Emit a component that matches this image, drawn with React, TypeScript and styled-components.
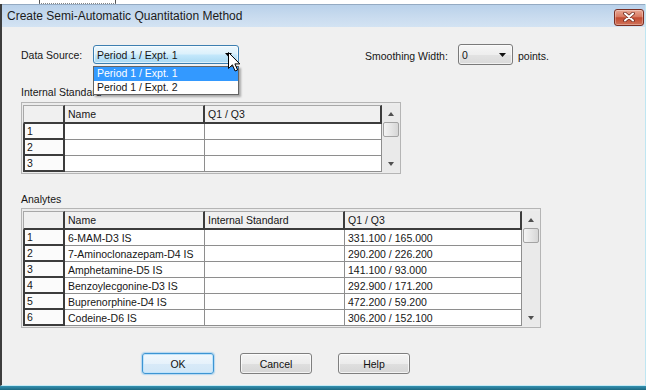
import React from 'react';
import styled, { createGlobalStyle } from 'styled-components';

const GlobalStyle = createGlobalStyle`
  html, body { margin: 0; padding: 0; }
  body {
    width: 646px; height: 390px; overflow: hidden; background: #fff;
    font-family: "Liberation Sans", Arial, sans-serif;
  }
  * { box-sizing: border-box; }
`;

const DARK = '#3c3c3c';
const GRID = '#8e8e8e';

const Screen = styled.div`
  width: 646px;
  height: 390px;
  display: flex;
  flex-direction: column;
  background: #fff;
  overflow: hidden;
`;

const BackdropTop = styled.div`
  height: 4px;
  flex: none;
  background: #fff;
  display: flex;
`;

const BackdropScrap = styled.div`
  margin-left: 39px;
  width: 77px;
  height: 4px;
  border-left: 1px solid #555;
  border-right: 1px solid #555;
  border-bottom: 1px dotted #888;
`;

const BackdropBottom = styled.div`
  height: 4px;
  flex: none;
  background: linear-gradient(#3592b2, #1c6880);
`;

const Window = styled.div`
  flex: 1;
  display: flex;
  flex-direction: column;
  border-left: 2px solid #3d3d3d;
  border-right: 1px solid #bfe6f2;
  border-bottom: 1px solid #c4ebf6;
  background: #f0f0f0;
`;

const TitleBar = styled.div`
  height: 23px;
  flex: none;
  display: flex;
  align-items: center;
  justify-content: space-between;
  padding: 0 1px 0 5px;
  background: linear-gradient(#b9d1ea, #cadcef 60%, #d3e3f3);
  border-top: 1px solid #94aac2;
`;

const Title = styled.span`
  font-size: 12px;
  color: #1b1b1b;
  white-space: nowrap;
`;

const CloseButton = styled.div`
  width: 30px;
  height: 17px;
  margin-top: 2px;
  border: 1px solid #7a2e22;
  border-radius: 3px;
  background: linear-gradient(#e9a895 0%, #d87a62 45%, #c24a31 52%, #d0735a 100%);
  box-shadow: inset 0 0 0 1px rgba(255, 255, 255, 0.3);
  display: flex;
  align-items: center;
  justify-content: center;
`;

const Client = styled.div`
  flex: 1;
  display: flex;
  flex-direction: column;
  padding: 17px 0 0 19px;
  font-size: 10.5px;
  color: #161616;
`;

const TopRow = styled.div`
  height: 21px;
  display: flex;
  align-items: center;
`;

const FieldGroup = styled.div<{ $width?: number }>`
  display: flex;
  align-items: center;
  height: 100%;
  ${(p) => (p.$width ? `width: ${p.$width}px;` : '')}
`;

const FieldLabel = styled.span<{ $width: number; $drop?: number }>`
  width: ${(p) => p.$width}px;
  white-space: nowrap;
  padding-top: ${(p) => p.$drop ?? 0}px;
`;

const ComboWrap = styled.div`
  position: relative;
`;

const Combo = styled.div<{ $width: number; $height: number; $focused?: boolean }>`
  width: ${(p) => p.$width}px;
  height: ${(p) => p.$height}px;
  border: 1px solid ${(p) => (p.$focused ? '#3c7fb1' : '#7a7a7a')};
  border-radius: 3px;
  background: ${(p) =>
    p.$focused
      ? 'linear-gradient(#eef8fd 0%, #dcf1fc 45%, #c2e7fb 55%, #a9d9f3 100%)'
      : 'linear-gradient(#f6f6f6 0%, #eeeeee 50%, #e2e2e2 55%, #dadada 100%)'};
  box-shadow: inset 0 0 0 1px rgba(255, 255, 255, 0.6);
  display: flex;
  align-items: center;
  justify-content: space-between;
  padding: 0 6px 0 3px;
  white-space: nowrap;
`;

const DropList = styled.div`
  position: absolute;
  top: 21px;
  left: 0;
  width: 146px;
  border: 1px solid #646464;
  background: #fff;
  box-shadow: 2px 2px 2px rgba(0, 0, 0, 0.3);
  z-index: 5;
  padding: 0;
`;

const DropItem = styled.div<{ $selected?: boolean }>`
  height: 13.5px;
  line-height: 13.5px;
  padding-left: 3px;
  background: ${(p) => (p.$selected ? '#3399ff' : '#fff')};
  color: ${(p) => (p.$selected ? '#fff' : '#161616')};
  white-space: nowrap;
`;

const Cursor = styled.svg`
  position: absolute;
  left: 135px;
  top: 7px;
  z-index: 6;
`;

const Units = styled.span`
  margin-left: 5px;
  padding-top: 3px;
`;

const SectionLabel = styled.div<{ $top: number; $bottom: number }>`
  margin-top: ${(p) => p.$top}px;
  margin-bottom: ${(p) => p.$bottom}px;
  height: 13px;
  line-height: 13px;
  white-space: nowrap;
`;

const GridFrame = styled.div`
  align-self: flex-start;
  display: flex;
  border: 1px solid #b5b5b5;
  background: #ececec;
  padding: 2px 0 1px 1px;
`;

const Table = styled.div`
  display: flex;
  flex-direction: column;
`;

const Row = styled.div<{ $cols: string; $header?: boolean }>`
  display: grid;
  grid-template-columns: ${(p) => p.$cols};
  height: ${(p) => (p.$header ? 19 : 16)}px;
`;

type CellKind = 'corner' | 'col' | 'row' | 'data';

const Cell = styled.div<{ $kind: CellKind }>`
  display: flex;
  align-items: center;
  white-space: nowrap;
  overflow: hidden;
  padding-left: ${(p) => (p.$kind === 'row' ? 2 : 3)}px;
  ${(p) => {
    switch (p.$kind) {
      case 'corner':
        return `background:#f0f0f0; border-top:1px solid #a8a8a8; border-left:1px solid #a8a8a8; border-right:2px solid ${DARK}; border-bottom:2px solid ${DARK};`;
      case 'col':
        return `background:#f0f0f0; border-top:1px solid #a8a8a8; border-right:2px solid ${DARK}; border-bottom:2px solid ${DARK};`;
      case 'row':
        return `background:#fbfbfb; border-left:2px solid ${DARK}; border-right:2px solid ${DARK}; border-bottom:2px solid ${DARK};`;
      default:
        return `background:#fff; border-right:1px solid ${GRID}; border-bottom:1px solid ${GRID};`;
    }
  }}
`;

const ScrollBar = styled.div`
  width: 18px;
  display: flex;
  flex-direction: column;
  background: #eaeaea;
`;

const ScrollButton = styled.div`
  height: 17px;
  display: flex;
  align-items: center;
  justify-content: center;
`;

const Thumb = styled.div`
  height: 15px;
  margin: 0 1px 0 1px;
  border: 1px solid #a3a3a3;
  border-radius: 2px;
  background: linear-gradient(90deg, #f4f4f4, #e3e3e3 60%, #d6d6d6);
`;

const Track = styled.div`
  flex: 1;
`;

const ButtonRow = styled.div`
  display: flex;
  gap: 26px;
  margin-top: 25px;
  margin-left: 121px;
`;

const DialogButton = styled.div<{ $default?: boolean }>`
  width: 72px;
  height: 21px;
  border-radius: 3px;
  display: flex;
  align-items: center;
  justify-content: center;
  font-size: 10.5px;
  color: #111;
  border: 1px solid ${(p) => (p.$default ? '#3d95d3' : '#7f7f7f')};
  background: ${(p) =>
    p.$default
      ? 'linear-gradient(#f2f8fd 0%, #e6f2fb 50%, #d8eaf8 52%, #d2e7f7 100%)'
      : 'linear-gradient(#f4f4f4 0%, #ececec 50%, #dfdfdf 52%, #d6d6d6 100%)'};
  box-shadow: ${(p) =>
    p.$default
      ? 'inset 0 0 0 1px #bfe3fb, 0 0 1px 1px rgba(120,190,240,0.5)'
      : 'inset 0 0 0 1px rgba(255,255,255,0.7)'};
`;

const Tri = ({ dir, color = '#505050', w = 7 }: { dir: 'up' | 'down'; color?: string; w?: number }) => (
  <svg width={w} height={4} viewBox={`0 0 ${w} 4`}>
    <path d={dir === 'up' ? `M0 4 L${w / 2} 0 L${w} 4 Z` : `M0 0 L${w} 0 L${w / 2} 4 Z`} fill={color} />
  </svg>
);

const Scroller = ({ thumb = 15 }: { thumb?: number }) => (
  <ScrollBar>
    <ScrollButton>
      <Tri dir="up" w={6} />
    </ScrollButton>
    <Thumb style={{ height: thumb }} />
    <Track />
    <ScrollButton>
      <Tri dir="down" w={6} />
    </ScrollButton>
  </ScrollBar>
);

type GridProps = {
  cols: number[];
  headers: string[];
  rows: string[][];
};

const DataGrid = ({ cols, headers, rows }: GridProps) => {
  const template = cols.map((c) => `${c}px`).join(' ');
  return (
    <GridFrame>
      <Table>
        <Row $cols={template} $header>
          <Cell $kind="corner" />
          {headers.map((h) => (
            <Cell key={h} $kind="col">
              {h}
            </Cell>
          ))}
        </Row>
        {rows.map((r, i) => (
          <Row key={i} $cols={template}>
            <Cell $kind="row">{i + 1}</Cell>
            {r.map((v, j) => (
              <Cell key={j} $kind="data">
                {v}
              </Cell>
            ))}
          </Row>
        ))}
      </Table>
      <Scroller />
    </GridFrame>
  );
};

const analytes: string[][] = [
  ['6-MAM-D3 IS', '', '331.100 / 165.000'],
  ['7-Aminoclonazepam-D4 IS', '', '290.200 / 226.200'],
  ['Amphetamine-D5 IS', '', '141.100 / 93.000'],
  ['Benzoylecgonine-D3 IS', '', '292.900 / 171.200'],
  ['Buprenorphine-D4 IS', '', '472.200 / 59.200'],
  ['Codeine-D6 IS', '', '306.200 / 152.100'],
];

export default function App() {
  return (
    <>
      <GlobalStyle />
      <Screen>
        <BackdropTop>
          <BackdropScrap />
        </BackdropTop>
        <Window>
          <TitleBar>
            <Title>Create Semi-Automatic Quantitation Method</Title>
            <CloseButton>
              <svg width="12" height="10" viewBox="0 0 12 10">
                <path d="M2 1.5 L10 8.5 M10 1.5 L2 8.5" stroke="#6e2a1f" strokeWidth="3.6" strokeLinecap="round" />
                <path d="M2 1.5 L10 8.5 M10 1.5 L2 8.5" stroke="#fff" strokeWidth="2" strokeLinecap="round" />
              </svg>
            </CloseButton>
          </TitleBar>
          <Client>
            <TopRow>
              <FieldGroup $width={344}>
                <FieldLabel $width={72}>Data Source:</FieldLabel>
                <ComboWrap>
                  <Combo $width={146} $height={19} $focused>
                    <span>Period 1 / Expt. 1</span>
                    <Tri dir="down" color="#000" />
                  </Combo>
                  <DropList>
                    <DropItem $selected>Period 1 / Expt. 1</DropItem>
                    <DropItem>Period 1 / Expt. 2</DropItem>
                  </DropList>
                  <Cursor width="13" height="20" viewBox="0 0 13 20">
                    <path
                      d="M0.5 0.5 V16.5 L4.4 12.8 L7.1 19 L9.6 18 L6.9 11.9 L11.8 11.9 Z"
                      fill="#fff"
                      stroke="#000"
                      strokeWidth="1"
                      strokeLinejoin="round"
                    />
                  </Cursor>
                </ComboWrap>
              </FieldGroup>
              <FieldGroup>
                <FieldLabel $width={93} $drop={3}>
                  Smoothing Width:
                </FieldLabel>
                <Combo $width={55} $height={21}>
                  <span>0</span>
                  <Tri dir="down" color="#111" />
                </Combo>
                <Units>points.</Units>
              </FieldGroup>
            </TopRow>

            <SectionLabel $top={21} $bottom={3}>
              Internal Standard
            </SectionLabel>
            <DataGrid cols={[42, 140, 177]} headers={['Name', 'Q1 / Q3']} rows={[['', ''], ['', ''], ['', '']]} />

            <SectionLabel $top={19} $bottom={2}>
              Analytes
            </SectionLabel>
            <DataGrid cols={[42, 140, 140, 177]} headers={['Name', 'Internal Standard', 'Q1 / Q3']} rows={analytes} />

            <ButtonRow>
              <DialogButton $default>OK</DialogButton>
              <DialogButton>Cancel</DialogButton>
              <DialogButton>Help</DialogButton>
            </ButtonRow>
          </Client>
        </Window>
        <BackdropBottom />
      </Screen>
    </>
  );
}
